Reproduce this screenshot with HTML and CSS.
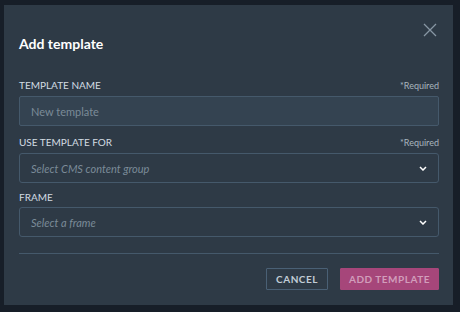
FILE: index.html
```html
<!DOCTYPE html>
<html lang="en">
<head>
<title>Add template</title>
<meta charset="utf-8">
<meta name="viewport" content="width=device-width, initial-scale=1">
<link rel="stylesheet" href="styles.css">
</head>
<body>

<div class="dialog">
  <button class="close" title="Close">
    <svg width="14" height="14" viewBox="0 0 14 14"><path d="M1 1L13 13M13 1L1 13" stroke="#8796a3" stroke-width="1.3" fill="none"/></svg>
  </button>
  <h1>Add template</h1>

  <div class="field">
    <div class="field_head">
      <label>TEMPLATE NAME</label>
      <span class="required">*Required</span>
    </div>
    <input class="text_input" type="text" placeholder="New template">
  </div>

  <div class="field field_tight">
    <div class="field_head">
      <label>USE TEMPLATE FOR</label>
      <span class="required">*Required</span>
    </div>
    <div class="select">
      <span>Select CMS content group</span>
      <svg width="8" height="5" viewBox="0 0 8 5"><path d="M1 1L4 4L7 1" stroke="#fff" stroke-width="1.5" fill="none"/></svg>
    </div>
  </div>

  <div class="field">
    <div class="field_head">
      <label>FRAME</label>
    </div>
    <div class="select">
      <span>Select a frame</span>
      <svg width="8" height="5" viewBox="0 0 8 5"><path d="M1 1L4 4L7 1" stroke="#fff" stroke-width="1.5" fill="none"/></svg>
    </div>
  </div>

  <div class="actions">
    <button class="btn btn_cancel">Cancel</button>
    <button class="btn btn_primary">Add template</button>
  </div>
</div>

</body>
</html>
```

FILE: styles.css
```css
body {
  margin: 0;
  background: #171e28;
  font-family: Lato, "Noto Sans", sans-serif;
  height: 312px;
  overflow: hidden;
}
.dialog {
  position: relative;
  box-sizing: border-box;
  width: 449px;
  height: 300px;
  margin: 5px 0 0 4px;
  padding: 30px 14px 0 15px;
  background: #2e3a46;
}
.close {
  position: absolute;
  top: 18px;
  right: 16px;
  padding: 0;
  border: none;
  background: none;
  display: flex;
  cursor: pointer;
}
h1 {
  margin: 0 0 26px;
  font-size: 14px;
  line-height: 18px;
  font-weight: 700;
  color: #fff;
}
.field {
  margin-bottom: 10px;
}
.field_tight {
  margin-bottom: 8px;
}
.field_head {
  display: flex;
  justify-content: space-between;
  align-items: baseline;
  margin-bottom: 4px;
}
.field_head label {
  font-size: 10px;
  line-height: 12px;
  color: #d3dce3;
}
.required {
  font-size: 9px;
  line-height: 12px;
  color: #a8b5bf;
}
.text_input {
  display: block;
  box-sizing: border-box;
  width: 100%;
  height: 30px;
  margin: 0;
  padding: 0 11px;
  border: 1px solid #45596b;
  border-radius: 2px;
  background: #344351;
  font-family: inherit;
  font-size: 11px;
  color: #fff;
  outline: none;
}
.text_input::placeholder {
  color: #7b8b98;
}
.select {
  box-sizing: border-box;
  height: 30px;
  padding: 0 11px;
  display: flex;
  align-items: center;
  justify-content: space-between;
  border: 1px solid #45596b;
  border-radius: 3px;
  font-size: 11px;
  font-style: italic;
  color: #7b8b98;
}
.actions {
  margin-top: 16px;
  padding-top: 14px;
  border-top: 1px solid #45596b;
  display: flex;
  justify-content: flex-end;
  gap: 12px;
}
.btn {
  box-sizing: border-box;
  height: 22px;
  padding: 0;
  font-family: inherit;
  font-size: 10px;
  font-weight: 700;
  letter-spacing: 0.5px;
  text-transform: uppercase;
  white-space: nowrap;
  border-radius: 1px;
  cursor: pointer;
}
.btn_cancel {
  width: 62px;
  background: transparent;
  border: 1px solid #4a6075;
  color: #c2cdd6;
}
.btn_primary {
  width: 99px;
  background: #a6467a;
  border: 1px solid #a6467a;
  color: #d19dbb;
}
```
